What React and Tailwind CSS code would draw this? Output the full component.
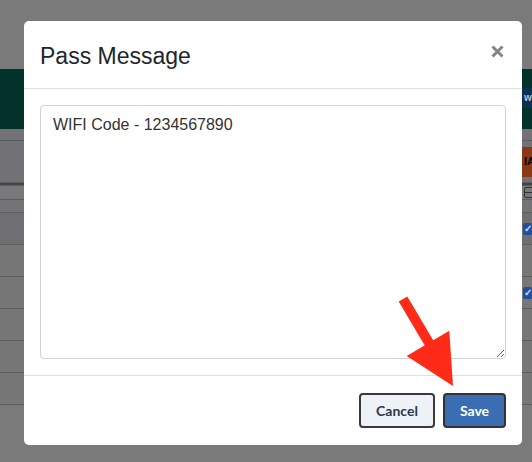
import React from "react";

const rows = [
    { h: "h-[12px]", bg: "bg-[#737377]", right: null },
    { h: "h-[42px]", bg: "bg-[#727276]", right: "orange" },
    { h: "h-[3px]", bg: "bg-[#444446]", right: null },
    { h: "h-[14px]", bg: "bg-[#79797b]", right: "box" },
    { h: "h-[13px]", bg: "bg-[#747477]", right: null },
    { h: "h-[32px]", bg: "bg-[#6f6f73]", right: "check" },
    { h: "h-[32px]", bg: "bg-[#777777]", right: null },
    { h: "h-[32px]", bg: "bg-[#777777]", right: "check" },
    { h: "h-[32px]", bg: "bg-[#777777]", right: null },
    { h: "h-[32px]", bg: "bg-[#777777]", right: null },
    { h: "h-[32px]", bg: "bg-[#777777]", right: null },
];

const RightCell = ({ kind }) => {
    if (kind === "orange") {
        return (
            <div className="w-[30px] h-full flex items-center">
                <div className="w-full h-[30px] bg-[#8a3914] pl-[22px] flex items-center text-[11px] font-bold text-black">IA</div>
            </div>
        );
    }
    if (kind === "box") {
        return (
            <div className="w-[30px] h-full flex items-center pl-[22px]">
                <div className="w-[12px] h-[11px] border border-[#333] rounded-[2px] flex items-center justify-center">
                    <div className="w-[8px] h-[1px] bg-[#333]" />
                </div>
            </div>
        );
    }
    if (kind === "check") {
        return (
            <div className="w-[30px] h-full flex items-center pl-[21px]">
                <div className="w-[12px] h-[12px] bg-[#1f4fa0] rounded-[2px] flex items-center justify-center text-[10px] text-[#cfd8e8] font-bold">✓</div>
            </div>
        );
    }
    return <div className="w-[30px]" />;
};

const App = () => {
    return (
        <div className="relative w-[532px] h-[462px] overflow-hidden bg-[#7a7a7a] font-['Liberation_Sans',Arial,sans-serif]">
            {/* page behind the backdrop */}
            <div className="h-[69px] bg-[#7a7a7a]" />
            <div className="h-[60px] bg-[#03322b] flex justify-end">
                <div className="w-[30px] mt-[19px] h-[20px] bg-[#0c3150] pl-[22px] text-[10px] font-bold text-[#b9c3cf] leading-[20px] overflow-hidden whitespace-nowrap">wn</div>
            </div>
            {rows.map((r, i) => (
                <div key={i} className={`${r.h} ${r.bg} flex justify-end border-b border-[#5e5e60]`}>
                    <RightCell kind={r.right} />
                </div>
            ))}

            {/* modal */}
            <div className="absolute left-[24px] top-[21px] w-[498px] bg-white rounded-[5px] flex flex-col">
                <div className="h-[68px] border-b border-[#dee2e6] flex items-center justify-between pl-[16px] pr-[18px]">
                    <h2 className="pt-[3px] text-[23px] text-[#212529] font-['Liberation_Sans',Arial,sans-serif]">Pass Message</h2>
                    <svg width="13" height="13" viewBox="0 0 13 13" className="mb-[6px]">
                        <path d="M1.5 1.5 L11.5 11.5 M11.5 1.5 L1.5 11.5" stroke="#858585" strokeWidth="3" />
                    </svg>
                </div>
                <div className="p-4">
                    <textarea
                        defaultValue="WIFI Code - 1234567890"
                        className="block w-full h-[254px] border border-[#ced4da] rounded-[4px] px-3 pt-[7px] pb-[5px] text-[16px] leading-[24px] text-[#333333] font-['Liberation_Sans',Arial,sans-serif] outline-none"
                    />
                </div>
                <div className="border-t border-[#dee2e6] flex justify-end gap-2 px-4 pt-[17px] pb-[17px]">
                    <button className="w-[76px] h-[35px] rounded-[4px] border-2 border-[#3a3a3a] bg-[#eef1f8] text-[14px] font-bold text-[#2d3748] font-['Lato',sans-serif]">
                        Cancel
                    </button>
                    <button className="w-[63px] h-[35px] rounded-[4px] border-2 border-[#333333] bg-[#3a6db1] text-[14px] font-bold text-white font-['Lato',sans-serif]">
                        Save
                    </button>
                </div>
            </div>

            {/* red annotation arrow */}
            <svg className="absolute left-0 top-0 pointer-events-none" width="532" height="462">
                <line x1="403" y1="299" x2="432" y2="348" stroke="#ff2a17" strokeWidth="10" />
                <polygon points="406.7,356 449.3,330.7 453,386" fill="#ff2a17" />
            </svg>
        </div>
    );
};

export default App;
